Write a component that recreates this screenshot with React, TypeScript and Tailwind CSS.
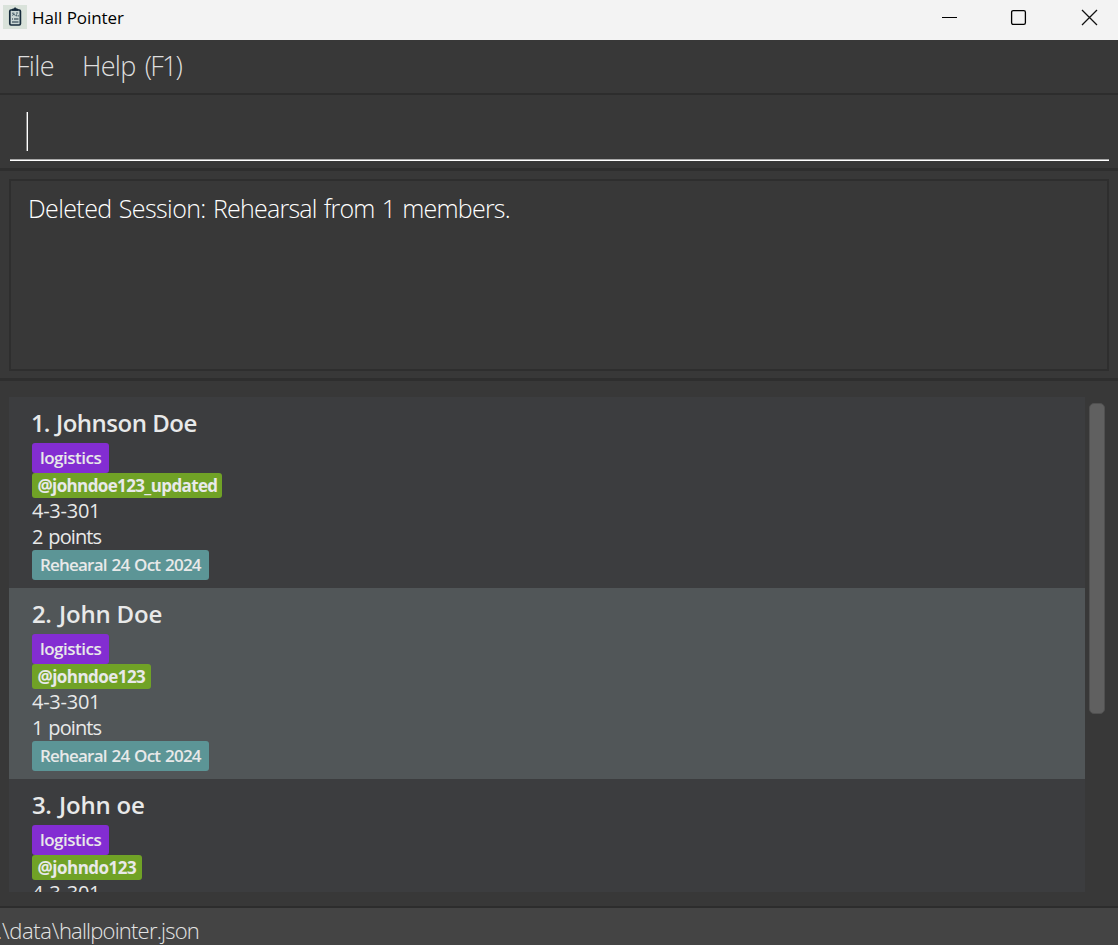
interface Member {
  rank: string;
  name: string;
  handle: string;
  room: string;
  points: string;
  session: string;
  rankClass: string;
  nameClass: string;
  handleClass: string;
}

const members: Member[] = [
  { rank: '1.', name: 'Johnson Doe', handle: '@johndoe123_updated', room: '4-3-301', points: '2 points', session: 'Rehearal 24 Oct 2024', rankClass: 'w-6 -ml-px mr-px tracking-[-0.9px]', nameClass: 'tracking-[-0.5px]', handleClass: 'w-[190px] tracking-[-0.63px]' },
  { rank: '2.', name: 'John Doe', handle: '@johndoe123', room: '4-3-301', points: '1 points', session: 'Rehearal 24 Oct 2024', rankClass: 'w-[27px] tracking-[-0.5px]', nameClass: 'tracking-[-0.2px]', handleClass: 'w-[119px] tracking-[-0.55px]' },
  { rank: '3.', name: 'John oe', handle: '@johndo123', room: '4-3-301', points: '1 points', session: 'Rehearal 24 Oct 2024', rankClass: 'w-[27px] tracking-[-0.5px]', nameClass: 'tracking-[-0.2px]', handleClass: 'w-[110px] tracking-[-0.5px]' },
];

function AppIcon() {
  return (
    <svg className="h-6 w-6 shrink-0" viewBox="0 0 24 24" fill="none">
      <rect width="24" height="24" fill="#d9e2da" />
      <rect x="6.8" y="5" width="10.6" height="15" rx="1.2" fill="#c9d6d4" stroke="#172c3c" strokeWidth="1.7" />
      <path d="M9.2 5.2V4.2h1.6a1.3 1.3 0 0 1 2.6 0H15v1z" fill="#172c3c" stroke="#172c3c" />
      <path d="M9 8.2h2.3M13 8h2M9.2 10.4l2-1.2 1.2 1.6M13.4 9.3v2M15.2 10v1.6" stroke="#344e5b" strokeWidth=".9" />
      <path d="M9 14h1M11 14h4.5M9 17h6.5" stroke="#172c3c" strokeWidth="1.1" />
    </svg>
  );
}

function TitleBar() {
  return (
    <header className="flex h-10 shrink-0 items-start bg-[#f3f3f3] pl-[3px] text-black">
      <div className="flex h-[34px] items-center">
        <AppIcon />
        <span className="ml-[5px] whitespace-nowrap pt-0.5 text-[17px] leading-6 tracking-[-0.07px]">Hall Pointer</span>
      </div>
      <div className="ml-auto mr-[20px] mt-[9px] flex">
        <svg className="h-[17px] w-[17px]" viewBox="0 0 17 17" fill="none"><path d="M1 8.5h15" stroke="#000" /></svg>
        <svg className="ml-[52px] h-[17px] w-[17px]" viewBox="0 0 17 17" fill="none"><rect x="1.6" y="1.6" width="13.8" height="13.8" rx="1.6" stroke="#000" strokeWidth="1.3" /></svg>
        <svg className="ml-[54px] h-[17px] w-[17px]" viewBox="0 0 17 17" fill="none"><path d="M1 1l15 15M16 1L1 16" stroke="#111" strokeWidth="1.3" /></svg>
      </div>
    </header>
  );
}

function MemberCard({ member, selected }: { member: Member; selected: boolean }) {
  return (
    <li className={`flex h-[191px] shrink-0 flex-col items-start pl-[23px] pt-[10px] text-[#e8e9e9] ${selected ? 'bg-[#515658]' : 'bg-[#3c3d3f]'}`}>
      <h2 className="mb-1 flex h-8 whitespace-nowrap text-[24px] font-semibold leading-8">
        <span className={member.rankClass}>{member.rank}</span>
        <span className={member.nameClass}>{member.name}</span>
      </h2>
      <span className="h-[30px] w-[77px] whitespace-nowrap rounded-[3px] bg-[#832dd2] pl-2 text-[17px] font-semibold leading-[29px] tracking-[-0.5px]">logistics</span>
      <span className={`h-[25px] whitespace-nowrap rounded-[3px] bg-[#70a226] pl-[5.5px] text-[17px] font-bold leading-[25px] ${member.handleClass}`}>{member.handle}</span>
      <span className="h-[26px] whitespace-nowrap text-[20px] leading-[26px] tracking-[-0.25px]">{member.room}</span>
      <span className="h-[26px] whitespace-nowrap text-[20px] leading-[26px] tracking-[-0.9px] [word-spacing:1.5px]">{member.points}</span>
      <span className="h-[30px] w-[177px] whitespace-nowrap rounded-[3px] bg-[#5c9596] pl-2 text-[17px] font-semibold leading-[29px] tracking-[-0.8px] [word-spacing:1.2px]">{member.session}</span>
    </li>
  );
}

export default function App() {
  return (
    <div className="flex h-[945px] w-full flex-col overflow-hidden bg-[#383838] font-['Open_Sans',sans-serif]">
      <TitleBar />
      <nav className="flex h-[55px] shrink-0 border-b-2 border-[#2d2d2d] pl-4 text-[27px] font-light leading-[51px] text-[#dedede]">
        <span className="w-[66px] whitespace-nowrap tracking-[-0.7px]">File</span>
        <span className="flex gap-[9px] whitespace-nowrap tracking-[-0.7px]">
          Help <span className="tracking-[-1.8px]">(F1)</span>
        </span>
      </nav>
      <section className="h-[76px] shrink-0 border-b-[3px] border-[#2e2e2e] pl-[10px] pr-[9px]">
        <div className="flex h-[65px] items-start border-b border-[#a8a8a8] pl-4 pt-[17px]">
          <div className="h-[39px] w-[2px] border-l border-[#888] bg-white" />
        </div>
        <div className="h-px bg-white" />
      </section>
      <section className="h-[210px] shrink-0 border-b-[3px] border-[#2e2e2e] px-[9px] pt-2">
        <div className="h-[192px] border-2 border-[#2e2e2e] pl-[17px] pt-[9px] text-[25px] font-light leading-9 text-white">
          <span className="whitespace-nowrap tracking-[-0.78px] [word-spacing:1.4px]">
            <span className="tracking-[-0.6px]">Deleted Session: </span>Rehearsal from 1 members.
          </span>
        </div>
      </section>
      <main className="flex h-[525px] shrink-0 pl-[9px] pt-4">
        <ul className="flex h-[495px] w-[1076px] flex-col overflow-hidden bg-[#3c3d3f]">
          {members.map((member, i) => <MemberCard key={member.name} member={member} selected={i % 2 === 1} />)}
        </ul>
        <div className="ml-1 mt-[6px] h-[311px] w-4 rounded-[5px] border border-[#505050] bg-[#606060]" />
      </main>
      <footer className="flex h-[39px] shrink-0 border-t-2 border-[#2d2d2d] bg-[#444444] pt-2 text-[22px] font-light leading-[29px] text-[#e4e4e4]">
        <span className="-ml-[3px] whitespace-nowrap tracking-[-0.8px]">
          <span className="tracking-[-0.3px]">.\data\</span>hallpointer.json
        </span>
      </footer>
    </div>
  );
}
